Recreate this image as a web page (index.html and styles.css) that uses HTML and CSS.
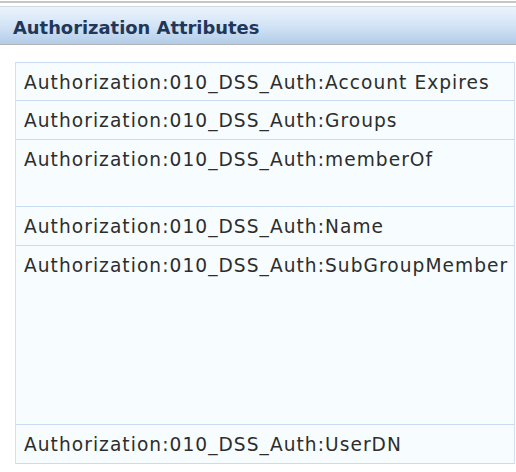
FILE: index.html
```html
<!DOCTYPE html>
<html>
<head>
<meta charset="utf-8">
<link rel="stylesheet" href="styles.css">
</head>
<body>
<div class="topline"></div>
<div class="header"><span class="title">Authorization Attributes</span></div>
<div class="list">
  <div class="row">Authorization:010_DSS_Auth:Account Expires</div>
  <div class="row">Authorization:010_DSS_Auth:Groups</div>
  <div class="row tall1">Authorization:010_DSS_Auth:memberOf</div>
  <div class="row">Authorization:010_DSS_Auth:Name</div>
  <div class="row tall2">Authorization:010_DSS_Auth:SubGroupMember</div>
  <div class="row">Authorization:010_DSS_Auth:UserDN</div>
</div>
</body>
</html>
```
FILE: styles.css
```css
html, body {
  margin: 0;
  padding: 0;
  background: #ffffff;
}
body {
  font-family: "DejaVu Sans", Verdana, sans-serif;
  width: 516px;
  overflow: hidden;
}
.topline {
  margin-top: 1px;
  height: 2px;
  background: #c6c6c6;
}
.header {
  margin-top: 3px;
  height: 37px;
  border-top: 1px solid #cfd9e4;
  border-bottom: 1px solid #b4b4b4;
  background: linear-gradient(to bottom, #ebf3fc 0%, #d3e4f6 50%, #b3cce9 100%);
  display: flex;
  align-items: center;
  padding-left: 13px;
}
.title {
  font-weight: bold;
  font-size: 17.9px;
  color: #1f3759;
  padding-top: 4px;
}
.list {
  margin-top: 17px;
  margin-left: 15px;
  width: 500px;
  display: flex;
  flex-direction: column;
}
.row {
  box-sizing: border-box;
  height: 39px;
  border-left: 1px solid #d2e0f4;
  border-right: 1px solid #d2e0f4;
  border-bottom: 1px solid #c9dbf3;
  background: #f7fcfe;
  color: #2d2d2d;
  font-size: 18.6px;
  letter-spacing: 1.05px;
  line-height: 20px;
  padding: 10px 0 0 8px;
  white-space: nowrap;
}
.row:first-child {
  border-top: 1px solid #c9dbf3;
}
.tall1 {
  height: 67px;
}
.tall2 {
  height: 179px;
}
```
